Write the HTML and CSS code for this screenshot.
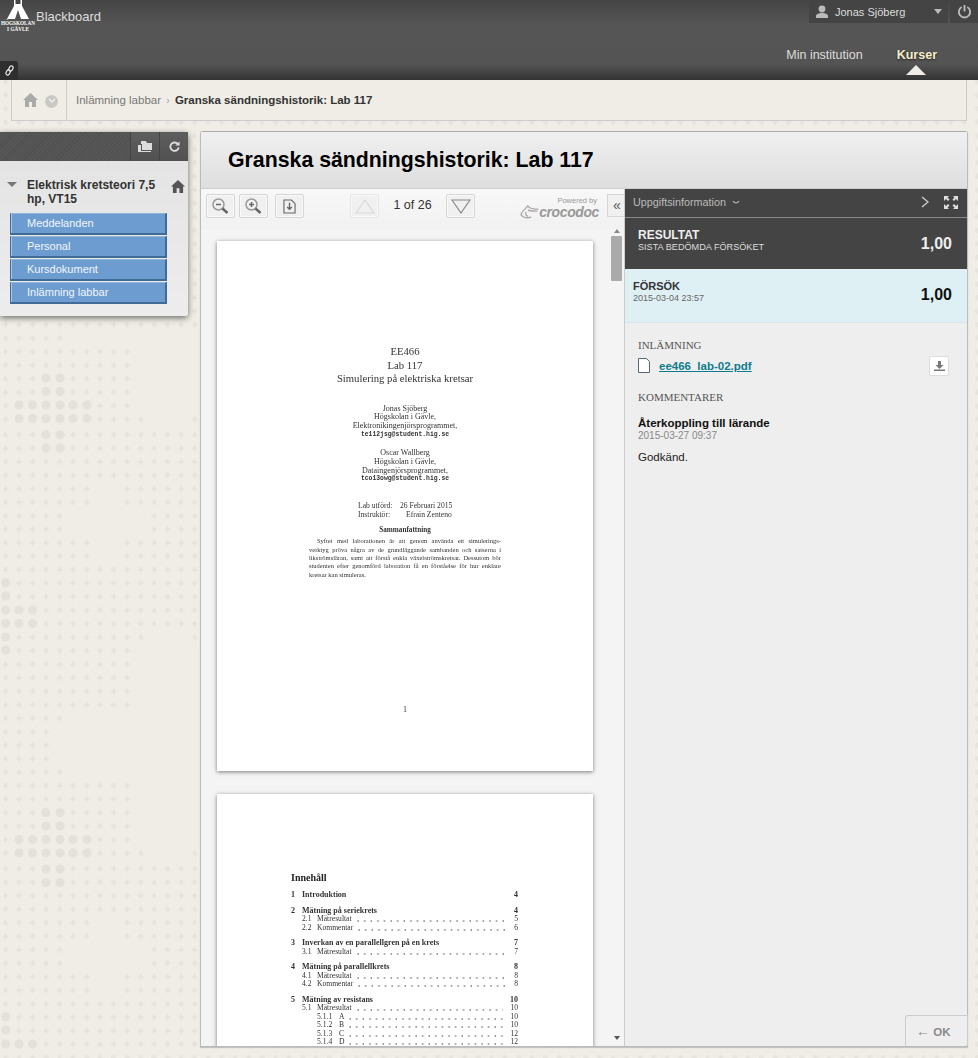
FILE: index.html
```html
<!DOCTYPE html>
<html>

<head>
    <title>Granska sändningshistorik: Lab 117</title>
    <link rel="stylesheet" href="styles.css">
</head>

<body>
    <header class="topbar">
        <div class="brand">
            <div class="logo">
                <svg width="36" height="21" viewBox="0 0 36 21">
                    <path d="M14 0h1.500v4h5V0H22v6l7 13h-8l-3-9-3 9H7l7-13z" fill="#fff" />
                </svg>
                <div class="logo-name">HÖGSKOLAN</div>
                <div class="logo-name">I GÄVLE</div>
            </div>
            <span class="brand-text">Blackboard</span>
        </div>
        <div class="topbar-right">
            <div class="user-row">
                <div class="user-menu">
                    <svg width="14" height="13" viewBox="0 0 14 13">
                        <circle cx="7" cy="4" r="3.4" fill="#bbb" />
                        <path d="M1 13v-2c0-2 3-3 6-3s6 1 6 3v2z" fill="#bbb" />
                    </svg>
                    <span class="user-name">Jonas Sjöberg</span>
                    <span class="user-caret"></span>
                </div>
                <div class="power-btn">
                    <svg width="15" height="15" viewBox="0 0 16 16" fill="none" stroke="#bbb" stroke-width="2">
                        <path d="M5 3.200a6 6 0 1 0 6 0" />
                        <path d="M8 1v7" />
                    </svg>
                </div>
            </div>
            <nav class="main-nav">
                <a class="nav-link">Min institution</a>
                <a class="nav-link nav-active">Kurser</a>
            </nav>
        </div>
        <div class="link-tab">
            <svg width="9" height="11" viewBox="0 0 10 12" fill="none" stroke="#eee" stroke-width="1.300">
                <rect x="4.500" y="0.800" width="4" height="6" rx="2" transform="rotate(25 6.500 4)" />
                <rect x="1.500" y="5.200" width="4" height="6" rx="2" transform="rotate(25 3.500 8)" />
            </svg>
        </div>
    </header>

    <div class="crumbs">
        <div class="crumb-icons">
            <svg width="15" height="14" viewBox="0 0 15 14">
                <path d="M7.500 0L15 7h-2v7H9V9H6v5H2V7H0z" fill="#aaa" />
            </svg>
            <span class="crumb-circle">
                <svg width="8" height="6" viewBox="0 0 8 6" fill="none" stroke="#eee" stroke-width="1.500">
                    <path d="M1 1l3 3 3-3" />
                </svg>
            </span>
        </div>
        <span class="crumb-link">Inlämning labbar</span>
        <span class="crumb-sep">›</span>
        <span class="crumb-current">Granska sändningshistorik: Lab 117</span>
    </div>

    <div class="layout">
        <aside class="sidebar">
            <div class="side-top">
                <div class="side-hatch"></div>
                <div class="side-btn">
                    <svg width="14" height="11" viewBox="0 0 14 11">
                        <path d="M3 0h5l1 2h5v7H4V3H3z" fill="#ddd" />
                        <path d="M0 4h3v6h10v1H0z" fill="#ddd" />
                    </svg>
                </div>
                <div class="side-btn">
                    <svg width="11" height="11" viewBox="0 0 12 12" fill="none" stroke="#ddd" stroke-width="2">
                        <path d="M9.800 3.500A4.600 4.600 0 1 0 10.600 7" />
                        <path d="M11.500 0.500v4.500H7z" fill="#ddd" stroke="none" />
                    </svg>
                </div>
            </div>
            <div class="side-body">
                <div class="course-head">
                    <span class="course-caret"></span>
                    <span class="course-title">Elektrisk kretsteori 7,5 hp, VT15</span>
                    <svg class="course-home" width="14" height="13" viewBox="0 0 15 14">
                        <path d="M7.500 0L15 7h-2v7H9V9H6v5H2V7H0z" fill="#555" />
                    </svg>
                </div>
                <ul class="course-menu">
                    <li>Meddelanden</li>
                    <li>Personal</li>
                    <li>Kursdokument</li>
                    <li>Inlämning labbar</li>
                </ul>
            </div>
        </aside>

        <main class="panel">
            <div class="panel-head">
                <h1>Granska sändningshistorik: Lab 117</h1>
            </div>
            <div class="panel-body">
                <section class="viewer">
                    <div class="toolbar">
                        <div class="tool-btn">
                            <svg class="zoom-icon" width="18" height="18" viewBox="0 0 18 18" fill="none" stroke="#999" stroke-width="1.500">
                                <circle cx="7.500" cy="7.500" r="5.500" />
                                <path d="M5 7.500h5" stroke="#666" />
                                <path d="M11.500 11.500l5 4.500" stroke="#666" stroke-width="2.500" />
                            </svg>
                        </div>
                        <div class="tool-btn">
                            <svg class="zoom-icon" width="18" height="18" viewBox="0 0 18 18" fill="none" stroke="#999" stroke-width="1.500">
                                <circle cx="7.500" cy="7.500" r="5.500" />
                                <path d="M5 7.500h5M7.500 5v5" stroke="#666" />
                                <path d="M11.500 11.500l5 4.500" stroke="#666" stroke-width="2.500" />
                            </svg>
                        </div>
                        <div class="tool-btn tool-gap">
                            <svg width="13" height="15" viewBox="0 0 14 16" fill="none" stroke="#666" stroke-width="1.200">
                                <path d="M1 1h8l4 4v10H1z" />
                                <path d="M7 4v7M4.500 8.500L7 11l2.500-2.500" stroke-width="1.500" />
                            </svg>
                        </div>
                        <div class="tool-btn tool-off page-up">
                            <svg width="20" height="15" viewBox="0 0 20 15" fill="none" stroke="#d8d8d8" stroke-width="1.200">
                                <path d="M10 1l9 13H1z" />
                            </svg>
                        </div>
                        <span class="page-count">1 of 26</span>
                        <div class="tool-btn">
                            <svg width="20" height="15" viewBox="0 0 20 15" fill="none" stroke="#888" stroke-width="1.200">
                                <path d="M10 14L19 1H1z" />
                            </svg>
                        </div>
                        <div class="croc">
                            <span class="croc-powered">Powered by</span>
                            <div class="croc-row">
                                <svg width="22" height="16" viewBox="0 0 22 16" fill="none" stroke="#aaa" stroke-width="1.500">
                                    <path d="M21 5C16 5 11 4 9 1 7 4 3 6 1 11c3 4 8 4 12 3" />
                                    <path d="M9 6c4 1 7 1 11 1M7 8c-1 2 0 4 2 5" />
                                </svg>
                                <span class="croc-name">crocodoc</span>
                            </div>
                        </div>
                        <div class="collapse-btn">«</div>
                    </div>
                    <div class="doc-area">
                        <div class="pages">
                            <article class="pdf-page">
                                <div class="pdf-title">
                                    <div>EE466</div>
                                    <div>Lab 117</div>
                                    <div>Simulering på elektriska kretsar</div>
                                </div>
                                <div class="pdf-author">
                                    <div>Jonas Sjöberg</div>
                                    <div>Högskolan i Gävle,</div>
                                    <div>Elektronikingenjörsprogrammet,</div>
                                    <div class="pdf-mail">te112jsg@student.hig.se</div>
                                </div>
                                <div class="pdf-author pdf-author-2">
                                    <div>Oscar Wallberg</div>
                                    <div>Högskolan i Gävle,</div>
                                    <div>Dataingenjörsprogrammet,</div>
                                    <div class="pdf-mail">tco13owg@student.hig.se</div>
                                </div>
                                <div class="pdf-meta">
                                    <div><span class="meta-key">Lab utförd:</span><span>26 Februari 2015</span></div>
                                    <div><span class="meta-key">Instruktör:</span><span class="meta-val">Efrain Zenteno</span></div>
                                </div>
                                <div class="pdf-abs-title">Sammanfattning</div>
                                <div class="pdf-abstract">
                                    <div class="abs-line abs-first">Syftet med laborationen är att genom använda ett simulerings-</div>
                                    <div class="abs-line">verktyg pröva några av de grundläggande sambanden och satserna i</div>
                                    <div class="abs-line">likströmsläran, samt att förstå enkla växelströmskretsar. Dessutom bör</div>
                                    <div class="abs-line">studenten efter genomförd laboration få en förståelse för hur enklare</div>
                                    <div>kretsar kan simuleras.</div>
                                </div>
                                <div class="pdf-num">1</div>
                            </article>
                            <article class="pdf-page toc-page">
                                <h2 class="toc-title">Innehåll</h2>
                                <div class="toc-row toc-main"><span class="toc-n">1</span><span class="toc-t">Introduktion</span><span class="toc-p">4</span></div>
                                <div class="toc-row toc-main"><span class="toc-n">2</span><span class="toc-t">Mätning på seriekrets</span><span class="toc-p">4</span></div>
                                <div class="toc-row toc-sub"><span class="toc-n">2.1</span><span class="toc-t">Mätresultat</span><span class="toc-dots"></span><span class="toc-p">5</span></div>
                                <div class="toc-row toc-sub"><span class="toc-n">2.2</span><span class="toc-t">Kommentar</span><span class="toc-dots"></span><span class="toc-p">6</span></div>
                                <div class="toc-row toc-main"><span class="toc-n">3</span><span class="toc-t">Inverkan av en parallellgren på en krets</span><span class="toc-p">7</span></div>
                                <div class="toc-row toc-sub"><span class="toc-n">3.1</span><span class="toc-t">Mätresultat</span><span class="toc-dots"></span><span class="toc-p">7</span></div>
                                <div class="toc-row toc-main"><span class="toc-n">4</span><span class="toc-t">Mätning på parallellkrets</span><span class="toc-p">8</span></div>
                                <div class="toc-row toc-sub"><span class="toc-n">4.1</span><span class="toc-t">Mätresultat</span><span class="toc-dots"></span><span class="toc-p">8</span></div>
                                <div class="toc-row toc-sub"><span class="toc-n">4.2</span><span class="toc-t">Kommentar</span><span class="toc-dots"></span><span class="toc-p">8</span></div>
                                <div class="toc-row toc-main"><span class="toc-n">5</span><span class="toc-t">Mätning av resistans</span><span class="toc-p">10</span></div>
                                <div class="toc-row toc-sub"><span class="toc-n">5.1</span><span class="toc-t">Mätresultat</span><span class="toc-dots"></span><span class="toc-p">10</span></div>
                                <div class="toc-row toc-sub2"><span class="toc-n">5.1.1</span><span class="toc-t">A</span><span class="toc-dots"></span><span class="toc-p">10</span></div>
                                <div class="toc-row toc-sub2"><span class="toc-n">5.1.2</span><span class="toc-t">B</span><span class="toc-dots"></span><span class="toc-p">10</span></div>
                                <div class="toc-row toc-sub2"><span class="toc-n">5.1.3</span><span class="toc-t">C</span><span class="toc-dots"></span><span class="toc-p">12</span></div>
                                <div class="toc-row toc-sub2"><span class="toc-n">5.1.4</span><span class="toc-t">D</span><span class="toc-dots"></span><span class="toc-p">12</span></div>
                            </article>
                        </div>
                        <div class="scrollbar">
                            <span class="arrow-up"></span>
                            <span class="thumb"></span>
                            <span class="arrow-down"></span>
                        </div>
                    </div>
                </section>

                <section class="info">
                    <div class="info-head">
                        <span class="info-label">Uppgiftsinformation</span>
                        <svg class="info-chev" width="8" height="5" viewBox="0 0 8 5" fill="none" stroke="#bbb" stroke-width="1.200">
                            <path d="M1 1c1 1.500 2 2 3 2s2-.5 3-2" />
                        </svg>
                        <svg class="info-next" width="8" height="12" viewBox="0 0 8 12" fill="none" stroke="#ccc" stroke-width="1.400">
                            <path d="M1 1l6 5-6 5" />
                        </svg>
                        <svg width="14" height="13" viewBox="0 0 14 13" fill="#ddd">
                            <path d="M0 0h5L3.500 1.500 5.500 3.500 4 5 2 3 0 5zM14 0H9l1.500 1.500-2 2L10 5l2-2 2 2zM0 13h5L3.500 11.500l2-2L4 8l-2 2-2-2zM14 13H9l1.500-1.500-2-2L10 8l2 2 2-2z" />
                        </svg>
                    </div>
                    <div class="result">
                        <div>
                            <div class="result-title">RESULTAT</div>
                            <div class="result-sub">SISTA BEDÖMDA FÖRSÖKET</div>
                        </div>
                        <div class="score">1,00</div>
                    </div>
                    <div class="attempt">
                        <div>
                            <div class="attempt-title">FÖRSÖK</div>
                            <div class="attempt-date">2015-03-04 23:57</div>
                        </div>
                        <div class="score">1,00</div>
                    </div>
                    <div class="info-body">
                        <h3 class="info-heading">INLÄMNING</h3>
                        <div class="file-row">
                            <svg width="12" height="15" viewBox="0 0 12 15" fill="#fff" stroke="#567" stroke-width="1">
                                <path d="M.5.5h8l3 3v11H.5z" />
                            </svg>
                            <a class="file-link">ee466_lab-02.pdf</a>
                            <span class="download-btn">
                                <svg width="11" height="10" viewBox="0 0 11 10" fill="#777">
                                    <path d="M4 0h3v4h2.500L5.500 8 1.500 4H4zM0 8.500h11V10H0z" />
                                </svg>
                            </span>
                        </div>
                        <h3 class="info-heading heading-comments">KOMMENTARER</h3>
                        <div class="comment-title">Återkoppling till lärande</div>
                        <div class="comment-date">2015-03-27 09:37</div>
                        <p class="comment-text">Godkänd.</p>
                    </div>
                </section>
            </div>
            <div class="ok-btn"><span class="ok-arrow">←</span> OK</div>
        </main>
    </div>
</body>

</html>
```
FILE: styles.css
```css
* {
    box-sizing: border-box;
}

html,
body {
    margin: 0;
    padding: 0;
}

body {
    width: 978px;
    height: 1058px;
    overflow: hidden;
    font-family: "Liberation Sans", Arial, sans-serif;
    background-color: #efede6;
    background-image:
        url("data:image/svg+xml,%3Csvg xmlns='http://www.w3.org/2000/svg' width='978' height='1058'%3E%3Cpath fill='%23efede6' d='M67 510h81v26H67zM93 483h28v27H93zM93 536h28v27H93zM93 916h28v27H93zM67 943h81v27H67zM93 970h28v27H93zM147 630h43v14h-43zM134 644h66v67h-66zM67 711h133v14H67zM53 725h147v40H53zM67 765h133v14H67zM134 779h66v67h-66zM147 846h43v15h-43zM67 331h133v13H67zM134 344h66v68h-66zM147 412h43v14h-43z'/%3E%3Cpath fill='none' stroke='%23e3e1d9' stroke-width='9' stroke-linecap='round' d='M46 378h.1M60 378h.1M46 391.500h.1M60 391.500h.1M19 405h.1M32.500 405h.1M46 405h.1M60 405h.1M73 405h.1M87 405h.1M19 418.500h.1M32.500 418.500h.1M46 418.500h.1M60 418.500h.1M73 418.500h.1M87 418.500h.1M46 434.700h.1M60 434.700h.1M46 448h.1M60 448h.1M46 812.500h.1M60 812.500h.1M46 826h.1M60 826h.1M19 839.500h.1M32.500 839.500h.1M46 839.500h.1M60 839.500h.1M73 839.500h.1M87 839.500h.1M19 853h.1M32.500 853h.1M46 853h.1M60 853h.1M73 853h.1M87 853h.1M46 869h.1M60 869h.1M46 882.500h.1M60 882.500h.1M5.600 582.700h.1M5.600 596h.1M5.600 610h.1M19 610h.1M32.500 610h.1M5.600 623.400h.1M19 623.400h.1M32.500 623.400h.1M5.600 637h.1M5.600 650h.1M5.600 1017h.1M5.600 1030h.1M5.600 1044h.1M19 1044h.1M32.500 1044h.1'/%3E%3C/svg%3E"),
        url("data:image/svg+xml,%3Csvg xmlns='http://www.w3.org/2000/svg' width='27' height='434'%3E%3Cdefs%3E%3Cpattern id='p' width='13.500' height='13.500' patternUnits='userSpaceOnUse'%3E%3Cpath d='M5.600 1v5.400M2.900 3.700h5.400' stroke='%23e4e2da' stroke-width='1.800' fill='none'/%3E%3C/pattern%3E%3C/defs%3E%3Crect width='27' height='432' fill='url(%23p)'/%3E%3C/svg%3E");
    background-repeat: no-repeat, repeat;
    background-position: 0 0, 0 -3px;
}

/* top bar */
.topbar {
    position: relative;
    display: flex;
    justify-content: space-between;
    height: 80px;
    background: linear-gradient(to bottom, #444 0%, #555 30%, #545454 80%, #333 100%);
}

.brand {
    display: flex;
    align-items: flex-start;
}

.logo {
    width: 36px;
    text-align: center;
    color: #fff;
    font-family: "Liberation Serif", serif;
    font-weight: bold;
    font-size: 5.200px;
    line-height: 5.500px;
}

.logo svg {
    display: block;
}

.logo-name {
    white-space: nowrap;
}

.brand-text {
    margin-top: 9px;
    color: #ddd;
    font-size: 13px;
    line-height: 15px;
}

.topbar-right {
    display: flex;
    flex-direction: column;
    align-items: flex-end;
}

.user-row {
    display: flex;
    height: 23px;
}

.user-menu {
    display: flex;
    align-items: center;
    width: 139px;
    padding-left: 6px;
    background: #444;
}

.user-name {
    flex: 1;
    margin-left: 6px;
    color: #ddd;
    font-size: 11px;
}

.user-caret {
    width: 0;
    height: 0;
    margin-right: 6px;
    border-left: 4px solid transparent;
    border-right: 4px solid transparent;
    border-top: 5px solid #bbb;
}

.power-btn {
    display: flex;
    align-items: center;
    justify-content: center;
    width: 28px;
    margin-left: 2px;
    background: #444;
}

.main-nav {
    display: flex;
    gap: 34px;
    margin-top: 25px;
    margin-right: 41px;
}

.nav-link {
    position: relative;
    color: #ddd;
    font-size: 12.500px;
    line-height: 15px;
}

.nav-active {
    color: #f7eecb;
    font-weight: bold;
    text-shadow: 0 1px 2px #222;
}

.nav-active::after {
    content: "";
    position: absolute;
    left: 9px;
    top: 17px;
    border-left: 10px solid transparent;
    border-right: 10px solid transparent;
    border-bottom: 10px solid #efede6;
}

.link-tab {
    position: absolute;
    left: 0;
    top: 61px;
    display: flex;
    align-items: center;
    justify-content: center;
    width: 18px;
    height: 19px;
    background: #2e2e2e;
    border-radius: 0 3px 0 0;
}

/* breadcrumb */
.crumbs {
    display: flex;
    align-items: center;
    height: 41px;
    margin: 0 11px;
    background: #efede6;
    border: 1px solid #ccc;
    border-top: 0;
    font-size: 11.500px;
}

.crumb-icons {
    display: flex;
    align-items: center;
    gap: 7px;
    width: 55px;
    height: 100%;
    padding-left: 11px;
    border-right: 1px solid #ccc;
}

.crumb-circle {
    display: flex;
    align-items: center;
    justify-content: center;
    width: 13px;
    height: 13px;
    margin-top: 2px;
    background: #c9c9c4;
    border-radius: 50%;
}

.crumb-link {
    margin-left: 9px;
    color: #777;
}

.crumb-sep {
    margin: 0 5px;
    color: #aaa;
}

.crumb-current {
    color: #333;
    font-weight: bold;
}

/* main layout */
.layout {
    display: flex;
    align-items: flex-start;
    margin-top: 10px;
}

.sidebar {
    flex: none;
    width: 188px;
    margin-top: 1px;
    background: #e9e9e9;
    border-radius: 0 3px 3px 0;
    box-shadow: 0 2px 6px rgba(0, 0, 0, 0.55);
}

.side-top {
    display: flex;
    height: 29px;
    background: #555;
    border-radius: 0 3px 0 0;
}

.side-hatch {
    flex: 1;
    background: repeating-linear-gradient(135deg, #505050 0, #505050 1px, #565656 1px, #565656 3px);
}

.side-btn {
    display: flex;
    flex: none;
    align-items: center;
    justify-content: center;
    width: 29px;
    background: linear-gradient(to bottom, #5e5e5e, #515151);
    border-left: 1px solid #444;
}

.side-body {
    height: 155px;
    padding: 17px 0 0 10px;
    background: linear-gradient(to bottom, #e4e4e4, #ededed);
    border-radius: 0 0 3px 3px;
}

.course-head {
    display: flex;
    align-items: flex-start;
    color: #333;
    font-size: 12px;
    font-weight: bold;
    line-height: 14px;
}

.course-caret {
    flex: none;
    width: 0;
    height: 0;
    margin: 4px 0 0 -3px;
    border-left: 5px solid transparent;
    border-right: 5px solid transparent;
    border-top: 5px solid #777;
}

.course-title {
    width: 140px;
    margin-left: 10px;
}

.course-home {
    margin: 2px 0 0 4px;
}

.course-menu {
    width: 157px;
    margin: 7px 0 0 0;
    padding: 0;
    list-style: none;
}

.course-menu li {
    height: 22px;
    margin-bottom: 1px;
    padding-left: 16px;
    background: #6d9dd0;
    border: 1px solid #3f6b96;
    border-top-color: #8fb5dd;
    border-right-width: 2px;
    border-bottom-width: 2px;
    box-shadow: inset 1px 0 0 #a8c8ea;
    color: #f2f6fa;
    font-size: 11px;
    line-height: 19px;
}

/* content panel */
.panel {
    position: relative;
    flex: none;
    width: 768px;
    height: 916px;
    margin-left: 12px;
    background: #eee;
    border: 1px solid #bbb;
    border-top-color: #aaa;
    border-radius: 3px 3px 0 0;
    box-shadow: 0 1px 1px rgba(0, 0, 0, 0.2);
}

.panel-head {
    height: 57px;
    padding: 14px 0 0 27px;
    background: linear-gradient(to bottom, #f0f0f0, #dedede);
    border-bottom: 1px solid #ccc;
}

.panel-head h1 {
    margin: 0;
    color: #000;
    font-size: 21.300px;
    line-height: 28px;
}

.panel-body {
    display: flex;
    height: 857px;
}

.viewer {
    display: flex;
    flex: none;
    flex-direction: column;
    width: 424px;
    background: #f4f4f4;
    border-right: 1px solid #ccc;
}

.toolbar {
    display: flex;
    flex: none;
    align-items: flex-start;
    gap: 4px;
    height: 40px;
    padding: 5px 0 0 5px;
    background: linear-gradient(to bottom, #f8f8f8, #f1f1f1);
}

.tool-btn {
    display: flex;
    flex: none;
    align-items: center;
    justify-content: center;
    width: 29px;
    height: 24px;
    border: 1px solid #d6d6d6;
    border-radius: 2px;
    background: #f0f0f0;
    box-shadow: inset 0 0 0 1px #f9f9f9;
}

.zoom-icon {
    margin-right: 2px;
}

.tool-gap {
    margin-left: 3px;
}

.page-up {
    margin-left: 42px;
}

.tool-off {
    border-color: #e6e6e6;
}

.page-count {
    width: 63px;
    margin: 0 -2px;
    color: #333;
    font-size: 12.500px;
    line-height: 23px;
    text-align: center;
}

.croc {
    flex: none;
    width: 79px;
    margin-left: 41px;
    text-align: right;
}

.croc-powered {
    display: block;
    height: 9px;
    margin-top: 2px;
    padding-right: 2px;
    color: #999;
    font-size: 7.500px;
    line-height: 9px;
}

.croc-row {
    display: flex;
    align-items: center;
    height: 14px;
    justify-content: flex-end;
}

.croc-name {
    color: #999;
    font-size: 14px;
    font-weight: bold;
    font-style: italic;
    line-height: 14px;
    letter-spacing: -0.4px;
}

.collapse-btn {
    flex: none;
    width: 17px;
    height: 23px;
    margin-left: 4px;
    padding-left: 5px;
    border: 1px solid #d6d6d6;
    border-right: 0;
    background: #f0f0f0;
    color: #555;
    font-size: 14px;
    line-height: 21px;
}

.doc-area {
    display: flex;
    flex: 1;
    min-height: 0;
}

.pages {
    width: 410px;
    padding: 12px 0 0 16px;
    overflow: hidden;
}

.scrollbar {
    display: flex;
    flex-direction: column;
    align-items: center;
    width: 11px;
    height: 100%;
}

.arrow-up,
.arrow-down {
    width: 0;
    height: 0;
    border-left: 3px solid transparent;
    border-right: 3px solid transparent;
}

.arrow-up {
    border-bottom: 4px solid #888;
}

.arrow-down {
    margin-top: auto;
    margin-bottom: 6px;
    border-top: 4px solid #555;
}

.thumb {
    width: 11px;
    height: 45px;
    margin-top: 3px;
    background: #aaa;
    border-radius: 1px;
}

/* the pdf pages */
.pdf-page {
    display: flex;
    flex-direction: column;
    width: 376px;
    height: 530px;
    padding-top: 104px;
    background: #fff;
    box-shadow: 0 1px 4px rgba(0, 0, 0, 0.5);
    color: #333;
    font-family: "Liberation Serif", serif;
    font-size: 8px;
    line-height: 8.700px;
    text-align: center;
    filter: blur(0.3px);
}

.pdf-title {
    font-size: 10.700px;
    line-height: 13.500px;
}

.pdf-author {
    margin-top: 19px;
}

.pdf-author-2 {
    margin-top: 10px;
}

.pdf-mail {
    font-family: "Liberation Mono", monospace;
    font-weight: bold;
    font-size: 6.400px;
}

.pdf-meta {
    margin-top: 18px;
    padding-left: 141px;
    font-size: 7.600px;
    text-align: left;
}

.meta-key {
    display: inline-block;
    width: 42px;
}

.meta-val {
    padding-left: 6px;
}

.pdf-abs-title {
    margin-top: 6px;
    font-size: 7.200px;
    font-weight: bold;
}

.pdf-abstract {
    margin: 3px 92px 0 92px;
    text-align: left;
    font-size: 6.500px;
    line-height: 8.400px;
}

.abs-line {
    text-align: justify;
    text-align-last: justify;
}

.abs-first {
    padding-left: 8px;
}

.pdf-num {
    margin-top: auto;
    margin-bottom: 56px;
}

.toc-page {
    margin-top: 23px;
    padding: 77px 75px 0 74px;
    text-align: left;
}

.toc-title {
    margin: 0 0 7px;
    color: #222;
    font-size: 10px;
    line-height: 13px;
}

.toc-row {
    display: flex;
    height: 8.500px;
    line-height: 8.500px;
    font-size: 7.600px;
}

.toc-main {
    height: 15.500px;
    padding-top: 7px;
    font-size: 8px;
    font-weight: bold;
}

.toc-page .toc-title + .toc-main {
    height: 8.500px;
    padding-top: 0;
}

.toc-n {
    flex: none;
    width: 11px;
}

.toc-sub {
    padding-left: 11px;
}

.toc-sub .toc-n {
    width: 15px;
}

.toc-sub2 {
    padding-left: 26px;
}

.toc-sub2 .toc-n {
    width: 22px;
}

.toc-t {
    flex: none;
}

.toc-dots {
    flex: 1;
    height: 8px;
    margin: 0 7px 0 5px;
    background: radial-gradient(circle at 1px 6px, #777 0.6px, transparent 0.8px) 0 0 / 6.600px 8px repeat-x;
}

.toc-p {
    flex: none;
    margin-left: auto;
}

/* assignment info */
.info {
    display: flex;
    flex-direction: column;
    flex: 1;
}

.info-head {
    display: flex;
    align-items: center;
    height: 29px;
    padding: 0 9px 2px 8px;
    background: #444;
    border-bottom: 1px solid #888;
}

.info-label {
    color: #bbb;
    font-size: 10.800px;
}

.info-chev {
    margin-left: 6px;
}

.info-next {
    margin-left: auto;
    margin-right: 15px;
}

.result {
    display: flex;
    align-items: center;
    justify-content: space-between;
    height: 51px;
    padding: 0 15px 5px 13px;
    background: #444;
}

.result-title {
    color: #eee;
    font-size: 12px;
    font-weight: bold;
    line-height: 13px;
}

.result-sub {
    color: #ddd;
    font-size: 9.150px;
    line-height: 11px;
}

.result .score {
    margin-top: 6px;
}

.score {
    color: #eee;
    font-size: 16px;
    font-weight: bold;
}

.attempt {
    display: flex;
    align-items: center;
    justify-content: space-between;
    height: 54px;
    padding: 0 15px 8px 8px;
    background: #dff0f5;
    border-bottom: 1px solid #d6e6ec;
}

.attempt .score {
    margin-top: 6px;
    color: #111;
}

.attempt-title {
    color: #333;
    font-size: 11px;
    font-weight: bold;
    line-height: 13px;
}

.attempt-date {
    color: #666;
    font-size: 9px;
    line-height: 11px;
}

.info-body {
    flex: 1;
    padding: 16px 18px 0 13px;
    background: #eee;
}

.info-heading {
    margin: 0;
    color: #555;
    font-family: "Liberation Serif", serif;
    font-size: 11px;
    font-weight: normal;
    line-height: 13px;
}

.file-row {
    display: flex;
    align-items: center;
    height: 21px;
    margin-top: 3px;
}

.file-link {
    margin-left: 9px;
    color: #0e7c8f;
    font-size: 11.500px;
    font-weight: bold;
    text-decoration: underline;
}

.download-btn {
    display: flex;
    align-items: center;
    justify-content: center;
    width: 20px;
    height: 20px;
    margin-left: auto;
    background: #fff;
    border: 1px solid #ddd;
    border-radius: 2px;
}

.heading-comments {
    margin-top: 15px;
}

.comment-title {
    margin-top: 13px;
    color: #111;
    font-size: 11.500px;
    font-weight: bold;
    line-height: 13px;
}

.comment-date {
    color: #888;
    font-size: 10px;
    line-height: 11px;
}

.comment-text {
    margin: 9px 0 0;
    color: #222;
    font-size: 11.500px;
    line-height: 14px;
}

.ok-btn {
    position: absolute;
    right: -1px;
    bottom: -1px;
    width: 63px;
    height: 32px;
    padding-left: 10px;
    background: #eee;
    border: 1px solid #ccc;
    border-bottom-color: #bbb;
    border-radius: 3px 0 3px 0;
    color: #888;
    font-size: 11.500px;
    font-weight: bold;
    line-height: 30px;
}

.ok-arrow {
    font-weight: normal;
    font-size: 14px;
}
```
